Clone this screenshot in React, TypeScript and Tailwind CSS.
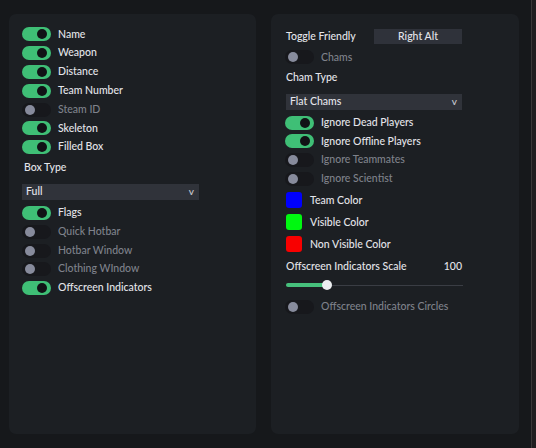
import React from 'react';

type ToggleRow = { label: string; on: boolean };

const visualsTop: ToggleRow[] = [
  { label: 'Name', on: true },
  { label: 'Weapon', on: true },
  { label: 'Distance', on: true },
  { label: 'Team Number', on: true },
  { label: 'Steam ID', on: false },
  { label: 'Skeleton', on: true },
  { label: 'Filled Box', on: true },
];

const visualsBottom: ToggleRow[] = [
  { label: 'Flags', on: true },
  { label: 'Quick Hotbar', on: false },
  { label: 'Hotbar Window', on: false },
  { label: 'Clothing WIndow', on: false },
  { label: 'Offscreen Indicators', on: true },
];

const ignoreRows: ToggleRow[] = [
  { label: 'Ignore Dead Players', on: true },
  { label: 'Ignore Offline Players', on: true },
  { label: 'Ignore Teammates', on: false },
  { label: 'Ignore Scientist', on: false },
];

function Switch({ on }: { on: boolean }) {
  return (
    <div
      className={`relative w-[29px] h-[14px] rounded-full shrink-0 ${
        on ? 'bg-[#3fbf76]' : 'bg-[#17181c]'
      }`}
    >
      <div
        className={`absolute top-[2px] w-[10px] h-[10px] rounded-full ${
          on ? 'right-[4px] bg-[#111316]' : 'left-[3px] bg-[#878b9c]'
        }`}
      />
    </div>
  );
}

function Toggle({ label, on }: ToggleRow) {
  return (
    <div className="flex items-center h-[18.8px] gap-[7px]">
      <Switch on={on} />
      <span className={on ? 'text-[#e4e5ea]' : 'text-[#7f828b]'}>{label}</span>
    </div>
  );
}

function Dropdown({ value, width }: { value: string; width: string }) {
  return (
    <div className={`flex items-center justify-between h-[16px] bg-[#30333a] pl-[4px] pr-[5px] ${width}`}>
      <span className="text-[#e4e5ea]">{value}</span>
      <span className="text-[#c9cad0] text-[10px]">v</span>
    </div>
  );
}

function Swatch({ color, label }: { color: string; label: string }) {
  return (
    <div className="flex items-center h-[22px] gap-[8px]">
      <div className={`w-[16px] h-[16px] rounded-[3px] ${color}`} />
      <span className="text-[#e4e5ea]">{label}</span>
    </div>
  );
}

export default function App() {
  return (
    <div
      className="w-[536px] h-[448px] bg-[#16181b] flex text-[10.5px] overflow-hidden"
      style={{ fontFamily: 'Lato, "Noto Sans", sans-serif' }}
    >
      {/* ESP panel */}
      <div className="ml-[9px] mt-[14px] w-[247px] h-[420px] rounded-[7px] bg-[#1c1f23] pl-[13px] pt-[11px] flex flex-col font-medium">
        {visualsTop.map((r) => (
          <Toggle key={r.label} {...r} />
        ))}
        <div className="h-[22px] flex items-center pl-[2px] text-[#e4e5ea]">Box Type</div>
        <div className="mt-[5.4px]">
          <Dropdown value="Full" width="w-[177px]" />
        </div>
        <div className="mt-[3.6px] flex flex-col">
          {visualsBottom.map((r) => (
            <Toggle key={r.label} {...r} />
          ))}
        </div>
      </div>

      {/* Chams panel */}
      <div className="ml-[15px] mt-[14px] w-[248px] h-[420px] rounded-[7px] bg-[#1c1f23] pl-[14px] pt-[15px] flex flex-col font-medium">
        <div className="flex items-center h-[15px]">
          <span className="w-[89px] pl-[1px] text-[#e4e5ea]">Toggle Friendly</span>
          <div className="w-[88px] h-[15px] bg-[#2f323a] flex items-center justify-center text-[#e4e5ea]">
            Right Alt
          </div>
        </div>
        <div className="mt-[4px]">
          <Toggle label="Chams" on={false} />
        </div>
        <div className="h-[22px] flex items-center pl-[1px] text-[#e4e5ea]">Cham Type</div>
        <div className="mt-[5px] pl-[1px]">
          <Dropdown value="Flat Chams" width="w-[176px]" />
        </div>
        <div className="mt-[3.5px] flex flex-col">
          {ignoreRows.map((r) => (
            <Toggle key={r.label} {...r} />
          ))}
        </div>
        <div className="mt-[1px] flex flex-col pl-[1px]">
          <Swatch color="bg-[#0000fe]" label="Team Color" />
          <Swatch color="bg-[#00f810]" label="Visible Color" />
          <Swatch color="bg-[#f80000]" label="Non Visible Color" />
        </div>
        <div className="mt-[1px] h-[21px] w-[177px] pl-[1px] flex items-center justify-between text-[#e4e5ea]">
          <span>Offscreen Indicators Scale</span>
          <span>100</span>
        </div>
        {/* scale slider */}
        <div className="relative h-[16px] w-[177px] ml-[1px]">
          <div className="absolute left-0 right-0 top-[7.5px] h-[1px] bg-[#3a3d44]" />
          <div className="absolute left-0 w-[41px] top-[6px] h-[4px] rounded-full bg-[#46c07c]" />
          <div className="absolute left-[36px] top-[3px] w-[10px] h-[10px] rounded-full bg-[#eceef0]" />
        </div>
        <div className="mt-[4px]">
          <Toggle label="Offscreen Indicators Circles" on={false} />
        </div>
      </div>

      <div className="ml-[12px] w-[1px] bg-[#3a3838]" />
      <div className="flex-1 bg-[#201e20]" />
    </div>
  );
}
